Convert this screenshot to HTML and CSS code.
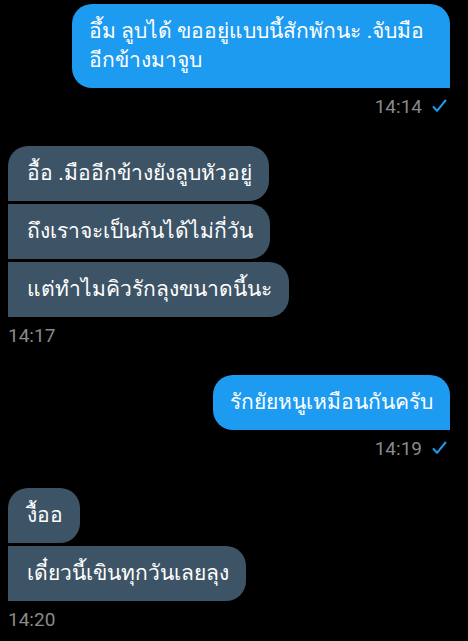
FILE: index.html
```html
<!DOCTYPE html>
<html lang="th">
<head>
    <meta charset="UTF-8">
    <meta name="viewport" content="width=device-width, initial-scale=1.0">
    <title>แชท</title>
    <link rel="stylesheet" href="styles.css">
</head>
<body>
    <main class="chat">
        <!-- ข้อความที่ส่ง -->
        <section class="group out">
            <div class="bubble wide">อึ้ม ลูบได้ ขออยู่แบบนี้สักพักนะ .จับมือ<br>อีกข้างมาจูบ</div>
            <div class="meta">
                <span class="time">14:14</span>
                <svg class="check" width="15" height="14" viewBox="0 0 15 14"><path d="M1.5 8 L5 11.8 L13.5 1.5" fill="none" stroke="#1d9bf0" stroke-width="2" stroke-linecap="round" stroke-linejoin="round"/></svg>
            </div>
        </section>

        <!-- ข้อความที่ได้รับ -->
        <section class="group in">
            <div class="bubble">อื้อ .มืออีกข้างยังลูบหัวอยู่</div>
            <div class="bubble">ถึงเราจะเป็นกันได้ไม่กี่วัน</div>
            <div class="bubble">แต่ทำไมคิวรักลุงขนาดนี้นะ</div>
            <div class="meta"><span class="time">14:17</span></div>
        </section>

        <section class="group out">
            <div class="bubble">รักยัยหนูเหมือนกันครับ</div>
            <div class="meta">
                <span class="time">14:19</span>
                <svg class="check" width="15" height="14" viewBox="0 0 15 14"><path d="M1.5 8 L5 11.8 L13.5 1.5" fill="none" stroke="#1d9bf0" stroke-width="2" stroke-linecap="round" stroke-linejoin="round"/></svg>
            </div>
        </section>

        <section class="group in">
            <div class="bubble">งื้ออ</div>
            <div class="bubble">เดี๋ยวนี้เขินทุกวันเลยลุง</div>
            <div class="meta"><span class="time">14:20</span></div>
        </section>
    </main>
</body>
</html>
```

FILE: styles.css
```css
/* Fondo general */
body {
    margin: 0;
    background-color: #000;
    font-family: Roboto, "Noto Sans", sans-serif;
    color: #fff;
}

/* Contenedor del chat */
.chat {
    display: flex;
    flex-direction: column;
    gap: 28px;
    padding: 4px 18px 0 8px;
}

/* Grupos de mensajes */
.group {
    display: flex;
    flex-direction: column;
    gap: 3px;
}

.group.out {
    align-items: flex-end;
}

.group.in {
    align-items: flex-start;
}

/* Burbujas */
.bubble {
    font-size: 21px;
    line-height: 29px;
    padding: 13px 17px;
    border-radius: 20px;
}

/* Burbuja de dos líneas, ocupa el ancho máximo */
.bubble.wide {
    width: 378px;
    box-sizing: border-box;
}

.out .bubble {
    background-color: #1d9bf0;
    border-bottom-right-radius: 0;
}

.in .bubble {
    background-color: #3d5466;
    border-radius: 0 20px 20px 0;
    padding-left: 19px;
}

.in .bubble:first-child {
    border-top-left-radius: 20px;
}

/* Hora y estado */
.meta {
    display: flex;
    align-items: center;
    gap: 10px;
    height: 24px;
    margin-top: 3px;
    font-size: 19px;
    color: #8a8a8a;
}

.out .meta {
    margin-right: 3px;
}

.check {
    display: block;
}
```
